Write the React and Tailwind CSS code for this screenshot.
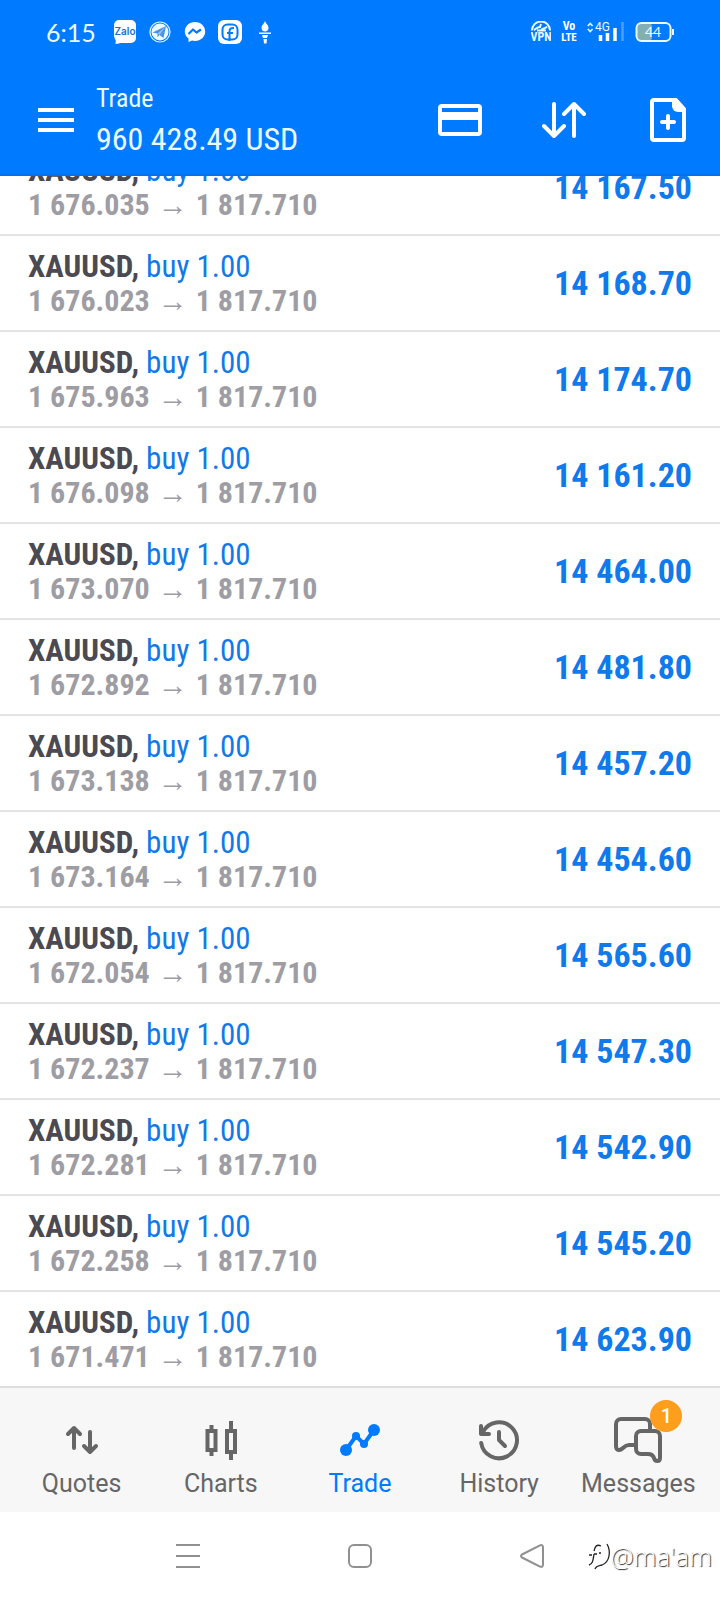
const positions = [
  { open: '1 676.035', profit: '14 167.50' },
  { open: '1 676.023', profit: '14 168.70' },
  { open: '1 675.963', profit: '14 174.70' },
  { open: '1 676.098', profit: '14 161.20' },
  { open: '1 673.070', profit: '14 464.00' },
  { open: '1 672.892', profit: '14 481.80' },
  { open: '1 673.138', profit: '14 457.20' },
  { open: '1 673.164', profit: '14 454.60' },
  { open: '1 672.054', profit: '14 565.60' },
  { open: '1 672.237', profit: '14 547.30' },
  { open: '1 672.281', profit: '14 542.90' },
  { open: '1 672.258', profit: '14 545.20' },
  { open: '1 671.471', profit: '14 623.90' },
];

function NotificationIcons() {
  return (
    <div className="flex items-center gap-[11px]">
      {/* Zalo */}
      <svg width="24" height="24" viewBox="0 0 24 24">
        <path d="M6 0h12a5 5 0 0 1 5 5v13a5 5 0 0 1-5 5H7c-2 1-4 1-5 .5 1-1 1-2 .5-3.500C1 18 1 15 1 12V5a5 5 0 0 1 5-5Z" fill="#fff" />
        <text x="12" y="15" textAnchor="middle" fontFamily="Inter, sans-serif" fontSize="10" fontWeight="600" fill="#1a6fd0">Zalo</text>
      </svg>
      {/* Telegram */}
      <svg width="24" height="24" viewBox="0 0 24 24">
        <circle cx="12" cy="12" r="10" fill="none" stroke="#d9f3ff" strokeWidth="1.2" />
        <circle cx="12" cy="12" r="8.500" fill="#e9fbff" />
        <path d="M4.500 12.500 18 6l-2.500 12-4-3-2 2.200V13.500Z" fill="#4b93e0" />
        <path d="M9.500 13.500 18 6l-6.500 9" fill="#8fc0f5" />
      </svg>
      {/* Messenger */}
      <svg width="24" height="24" viewBox="0 0 24 24">
        <path d="M12 2c5.800 0 10.200 4.200 10.200 9.600S17.800 21 12 21c-1 0-2-.1-3-.4L5.500 22v-3.500C3 16.800 1.800 14.300 1.800 11.600 1.800 6.200 6.200 2 12 2Z" fill="#fff" />
        <path d="m5.500 14 4.500-4.500 3.500 3L18 9.500" fill="none" stroke="#007aff" strokeWidth="2.200" strokeLinejoin="round" />
      </svg>
      {/* Facebook */}
      <svg width="24" height="24" viewBox="0 0 24 24">
        <rect width="24" height="24" rx="6" fill="#fff" />
        <rect x="4.500" y="4.500" width="15" height="15" rx="5" fill="none" stroke="#007aff" strokeWidth="2" />
        <path d="M11.500 21v-9.500C11.500 8.800 12.800 7.800 16 8M9 13h6" fill="none" stroke="#007aff" strokeWidth="2" />
      </svg>
      {/* Torch */}
      <svg width="24" height="24" viewBox="0 0 24 24" fill="#fff">
        <path d="M12 1c1 3 3.500 4 3.500 7 0 2-1.500 3.500-3.500 3.500S8.500 10 8.500 8C8.500 5 11 4 12 1ZM6 12.500h12V14H6ZM9 15h6l-1 3h-4ZM10.500 19h3.500l-.5 4.500h-2.500Z" />
      </svg>
    </div>
  );
}

function SystemIcons() {
  return (
    <div className="flex items-center gap-[10px]">
      {/* VPN */}
      <svg width="20" height="22" viewBox="0 0 20 22">
        <path d="M1 9.500a9 9 0 0 1 18 0" fill="none" stroke="#e9fbff" strokeWidth="2" />
        <path d="M3 9c2-1 3-3 6-3l1-3M10 9.500c1-3 4-1 6-4M6 9.500h9" fill="none" stroke="#e9fbff" strokeWidth="2" />
        <text x="10" y="20" textAnchor="middle" fontFamily="Roboto Condensed, Roboto, sans-serif" fontSize="12" fontWeight="700" fill="#e9fbff">VPN</text>
      </svg>
      {/* VoLTE */}
      <svg width="16" height="24" viewBox="0 0 16 24" fontFamily="Roboto Condensed, Roboto, sans-serif" fontWeight="700" fill="#fff">
        <text x="8" y="10" textAnchor="middle" fontSize="12">Vo</text>
        <text x="8" y="21" textAnchor="middle" fontSize="11">LTE</text>
      </svg>
      {/* Signal */}
      <svg width="38" height="22" viewBox="0 0 38 22">
        <path d="M.8 5 3.200 2.500 5.600 5M.8 8 3.200 10.500 5.600 8" fill="none" stroke="#d9f3ff" strokeWidth="1.800" />
        <text x="8" y="10" fontFamily="Roboto, sans-serif" fontSize="12" fill="#e9fbff">4G</text>
        <path d="M13.500 14v6M20.500 12v8M28 7v13" stroke="#fff" strokeWidth="3.500" />
        <path d="M35.500 1v19" stroke="#4aa0ff" strokeWidth="2.500" />
      </svg>
      {/* Battery */}
      <svg width="40" height="22" viewBox="0 0 40 22">
        <rect x="2" y="2" width="15" height="18" rx="4" fill="#82aeb8" />
        <rect x="1.500" y="2" width="34" height="18" rx="5" fill="none" stroke="#e9fbff" strokeWidth="2" />
        <path d="M38 8v6" stroke="#e9fbff" strokeWidth="2" />
        <text x="18" y="15.500" textAnchor="middle" fontFamily="Lato, sans-serif" fontSize="14" fill="#e9fbff">44</text>
      </svg>
    </div>
  );
}

function Header() {
  return (
    <header className="relative z-10 bg-[#007aff] border-b-2 border-[#0571ea]">
      <div className="flex items-center justify-between h-16 pl-[46px] pr-[45px]">
        <div className="flex items-center gap-[17px]">
          <span className="font-[Lato,sans-serif] text-[25px] leading-8 text-[#e9fbff]">6:15</span>
          <NotificationIcons />
        </div>
        <SystemIcons />
      </div>

      <div className="flex items-center pt-[15px] pb-[13px] pl-[38px] pr-[30px]">
        <button type="button" aria-label="Menu" className="mr-[22px]">
          <svg width="36" height="24" viewBox="0 0 36 24" fill="#fff">
            <path d="M0 0h36v4H0ZM0 10h36v4H0ZM0 20h36v4H0Z" />
          </svg>
        </button>
        <div className="grow text-[#e9fbff]">
          <h1 className="text-[26px] leading-[38px]">Trade</h1>
          <p className="text-[32px] leading-[44px]">960 428.49 USD</p>
        </div>
        <div className="flex items-center gap-[60px]">
          <button type="button" aria-label="Deposit">
            <svg width="44" height="44" viewBox="0 0 44 44">
              <rect x="2" y="8" width="40" height="28" rx="2" fill="none" stroke="#fff" strokeWidth="4" />
              <path d="M2 14h40v8H2Z" fill="#fff" />
            </svg>
          </button>
          <button type="button" aria-label="Sort">
            <svg width="44" height="44" viewBox="0 0 44 44" fill="none" stroke="#fff" strokeWidth="4" strokeLinecap="round" strokeLinejoin="round">
              <path d="M12 6v32M2 28l10 10 10-10M32 38V6M22 16 32 6l10 10" />
            </svg>
          </button>
          <button type="button" aria-label="New order">
            <svg width="44" height="44" viewBox="0 0 44 44" fill="none" stroke="#fff" strokeWidth="4" strokeLinejoin="round">
              <path d="M30 2H8a2 2 0 0 0-2 2v36a2 2 0 0 0 2 2h28a2 2 0 0 0 2-2V11Z" />
              <path d="M26 2h4l8 9v3h-6a6 6 0 0 1-6-6Z" fill="#fff" stroke="none" />
              <path d="M22 18v12M16 24h12" strokeLinecap="round" />
            </svg>
          </button>
        </div>
      </div>
    </header>
  );
}

function PositionRow({ open, profit }) {
  return (
    <li className="flex items-center justify-between px-7 border-b-2 border-[#e3e3e3] first:-mt-9 last:border-b-0">
      <div className="pt-[14px] pb-3 leading-[34px]">
        <p className="text-[31px]">
          <span className="font-bold text-[#4a4a50]">XAUUSD,</span>{' '}
          <span className="text-[#1479e8]">buy 1.00</span>
        </p>
        <p className="flex items-baseline gap-2 text-[30px] font-bold text-[#9d9da3]">
          <span>{open}</span>
          <span className="font-['Liberation_Sans',sans-serif] leading-none">→</span>
          <span>1 817.710</span>
        </p>
      </div>
      <span className="text-[34px] leading-[42px] font-bold text-[#0f7aec]">{profit}</span>
    </li>
  );
}

function QuotesIcon() {
  return (
    <svg width="48" height="48" viewBox="0 0 48 48" fill="none" stroke="currentColor" strokeWidth="4" strokeLinecap="round" strokeLinejoin="round">
      <path d="M16 12v20M10 18l6-6 6 6M32 16v20M26 30l6 6 6-6" />
    </svg>
  );
}

function ChartsIcon() {
  return (
    <svg width="48" height="48" viewBox="0 0 48 48" fill="none" stroke="currentColor" strokeWidth="4">
      <path d="M10.500 15h8v19h-8ZM14.500 9v5M14.500 35v5M30 15h8v21h-8ZM34 5v9M34 37v7" />
    </svg>
  );
}

function TradeIcon() {
  return (
    <svg width="48" height="48" viewBox="0 0 48 48" fill="currentColor">
      <path d="m10 34 10-14 8 8 10-14" fill="none" stroke="currentColor" strokeWidth="4" />
      <circle cx="10" cy="34" r="6" />
      <circle cx="20" cy="20" r="4" />
      <circle cx="28" cy="28" r="4" />
      <circle cx="38" cy="14" r="6" />
    </svg>
  );
}

function HistoryIcon() {
  return (
    <svg width="48" height="48" viewBox="0 0 48 48" fill="none" stroke="currentColor" strokeWidth="4" strokeLinecap="round" strokeLinejoin="round">
      <path d="M6.200 27A18 18 0 1 0 8 16" />
      <path d="M6 10v8h8" />
      <path d="M24 16v8l6 6" />
    </svg>
  );
}

function MessagesIcon() {
  return (
    <svg width="48" height="48" viewBox="0 0 48 48" fill="none" stroke="currentColor" strokeWidth="4" strokeLinejoin="round">
      <path d="M36 14V8a5 5 0 0 0-5-5H7a5 5 0 0 0-5 5v22c0 5 4 5 7 2 2-2 4-3 6-3h6" />
      <path d="M27 15h14a5 5 0 0 1 5 5v22c0 4-5 4-6 0-1-3-3-4-6-4h-7a5 5 0 0 1-5-5V20a5 5 0 0 1 5-5Z" />
    </svg>
  );
}

const tabs = [
  { label: 'Quotes', Icon: QuotesIcon },
  { label: 'Charts', Icon: ChartsIcon },
  { label: 'Trade', Icon: TradeIcon, active: true },
  { label: 'History', Icon: HistoryIcon },
  { label: 'Messages', Icon: MessagesIcon, badge: 1 },
];

function TabBar() {
  return (
    <nav className="grid grid-cols-5 px-3 pt-7 pb-3 bg-[#f7f7f7] border-t-2 border-[#dedede] font-[Roboto,sans-serif]">
      {tabs.map(({ label, Icon, active, badge }) => (
        <a
          key={label}
          href="#"
          aria-current={active ? 'page' : undefined}
          className={`flex flex-col items-center gap-1 ${active ? 'text-[#007aff]' : 'text-[#666666]'}`}
        >
          <span className="relative">
            <Icon />
            {badge && (
              <span className="absolute -top-4 left-9 size-8 rounded-full bg-[#ff9d1c] text-white text-xl leading-8 font-medium text-center">
                {badge}
              </span>
            )}
          </span>
          <span className="text-[25px] leading-8">{label}</span>
        </a>
      ))}
    </nav>
  );
}

function SystemBar() {
  return (
    <footer className="relative flex justify-center gap-[148px] py-8 bg-white text-[#909090]">
      <button type="button" aria-label="Recent apps">
        <svg width="24" height="24" viewBox="0 0 24 24" stroke="currentColor" strokeWidth="2">
          <path d="M0 1h24M0 12h24M0 23h24" />
        </svg>
      </button>
      <button type="button" aria-label="Home">
        <svg width="24" height="24" viewBox="0 0 24 24" fill="none" stroke="currentColor" strokeWidth="2">
          <rect x="1" y="1" width="22" height="22" rx="5" />
        </svg>
      </button>
      <button type="button" aria-label="Back">
        <svg width="24" height="24" viewBox="0 0 24 24" fill="none" stroke="currentColor" strokeWidth="2" strokeLinejoin="round">
          <path d="M2 10.500 20 1.400q3-1.200 3 2v17.200q0 3-3 2L2 13.500q-2-1.500 0-3Z" />
        </svg>
      </button>

      {/* Author signature */}
      <div className="absolute right-2 bottom-[26px] flex items-center">
        <svg width="26" height="30" viewBox="0 0 26 30" fill="none" stroke="#222" strokeWidth="1.300">
          <path d="M16 5c-4-2-6 0-7 5M4 14h3M9 13h3M9 13c-1 6-1 10-5 11M14 12h2M22 3c4 7 3 18-5 21-4 1-6 1-7 4" />
        </svg>
        <span className="font-['Open_Sans',sans-serif] font-light text-[26px] leading-9 text-white [text-shadow:1px_1px_1px_#222]">@ma'am</span>
      </div>
    </footer>
  );
}

export default function App() {
  return (
    <div className="bg-white font-['Roboto_Condensed','Liberation_Sans_Narrow',Roboto,sans-serif]">
      <Header />
      <main className="overflow-hidden">
        <ul>
          {positions.map((position) => (
            <PositionRow key={position.open} open={position.open} profit={position.profit} />
          ))}
        </ul>
      </main>
      <TabBar />
      <SystemBar />
    </div>
  );
}
